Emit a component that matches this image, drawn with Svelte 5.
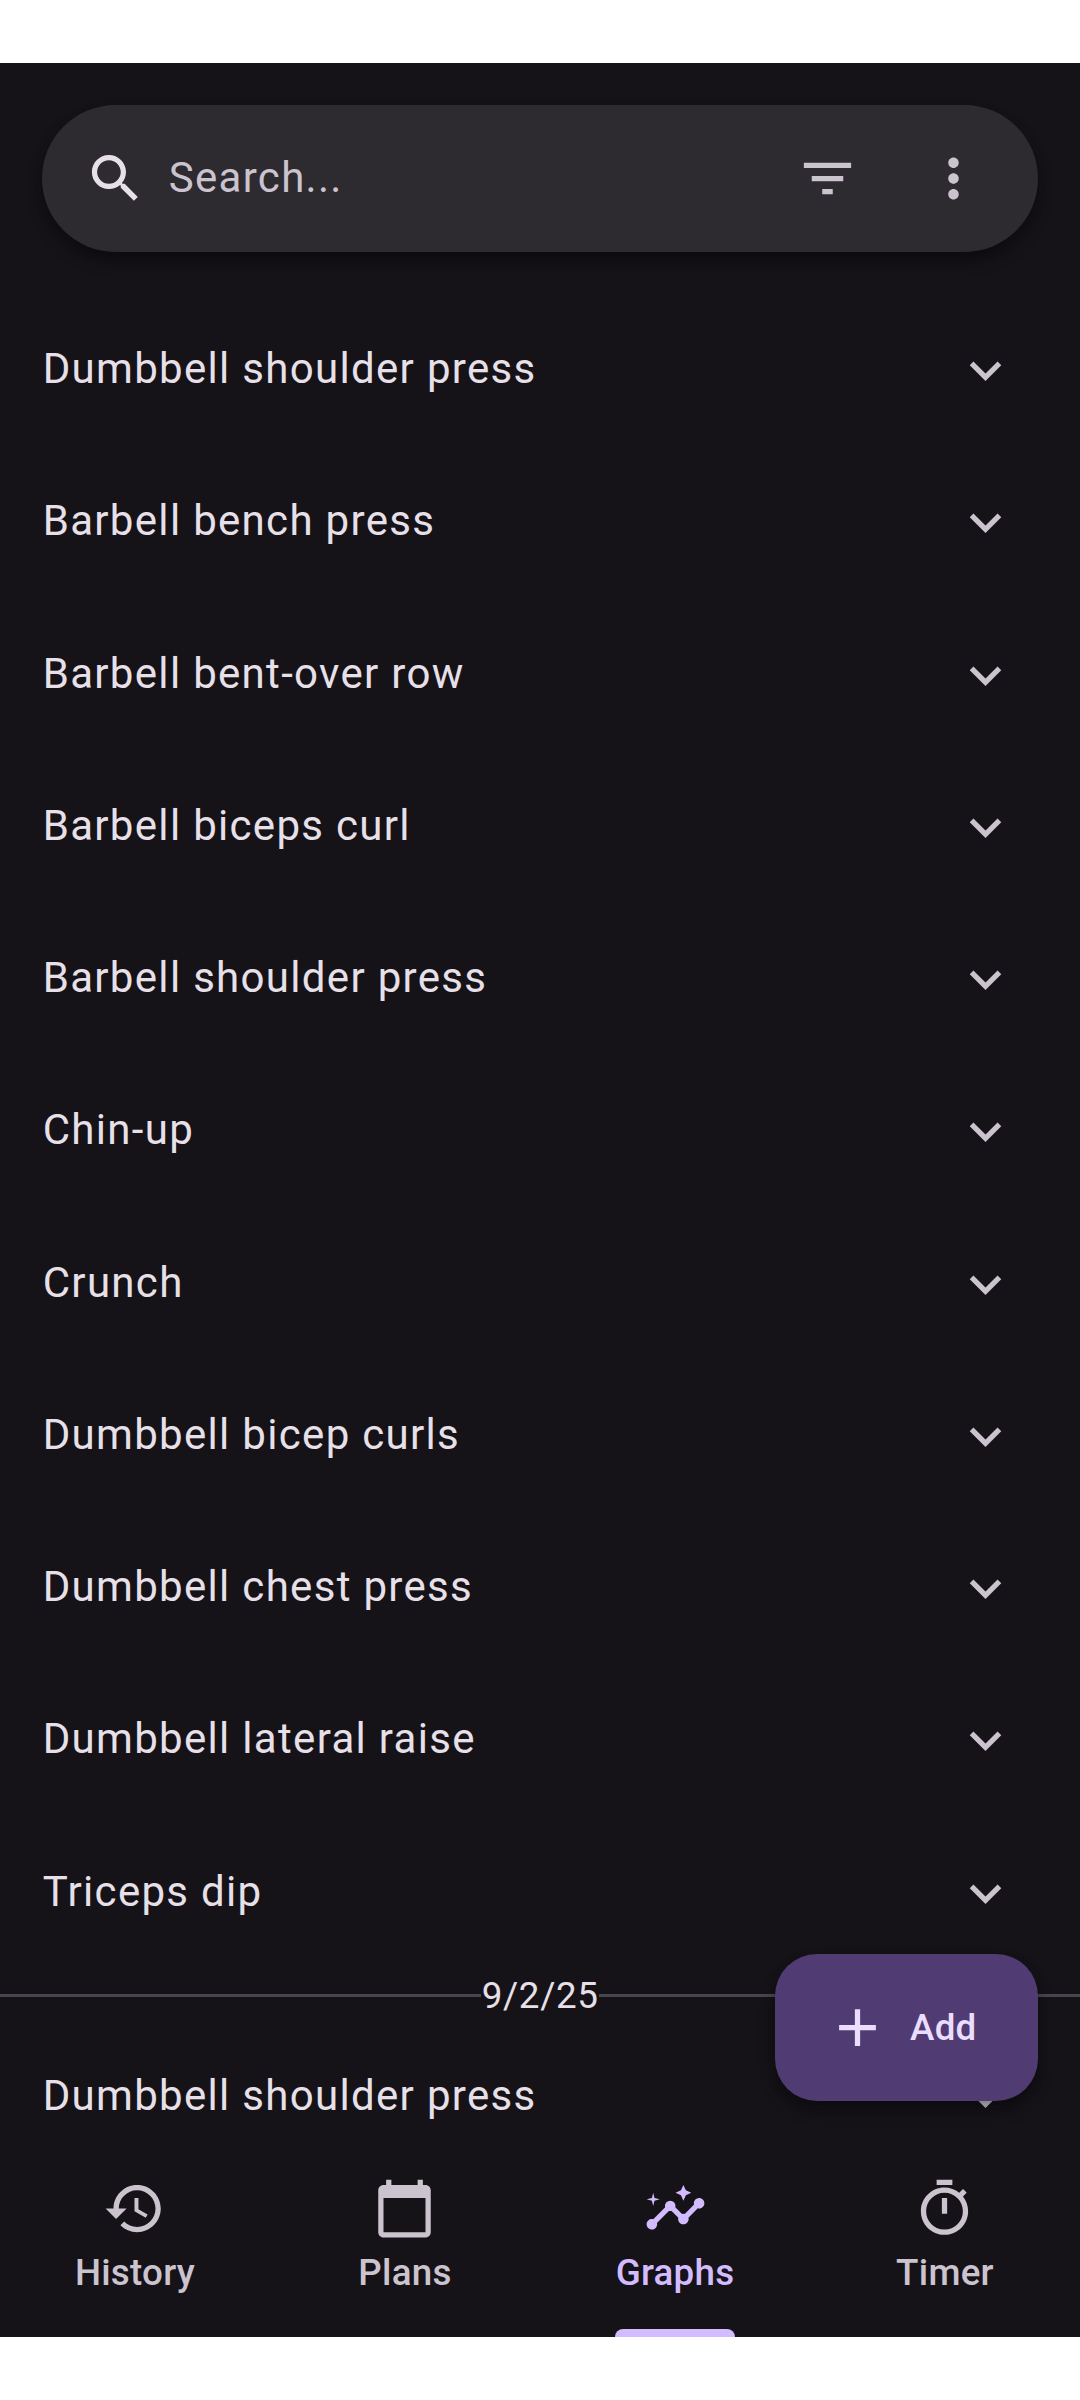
<script>
  const exercises = [
    'Dumbbell shoulder press',
    'Barbell bench press',
    'Barbell bent-over row',
    'Barbell biceps curl',
    'Barbell shoulder press',
    'Chin-up',
    'Crunch',
    'Dumbbell bicep curls',
    'Dumbbell chest press',
    'Dumbbell lateral raise',
    'Triceps dip'
  ];
  const earlier = ['Dumbbell shoulder press'];

  const tabs = [
    {
      label: 'History',
      icon: 'M13 3c-4.97 0-9 4.03-9 9H1l3.89 3.89.07.14L9 12H6c0-3.87 3.13-7 7-7s7 3.13 7 7-3.13 7-7 7c-1.93 0-3.68-.79-4.94-2.06l-1.42 1.42C8.27 19.99 10.51 21 13 21c4.97 0 9-4.03 9-9s-4.03-9-9-9zm-1 5v5l4.28 2.54.72-1.21-3.5-2.08V8H12z'
    },
    {
      label: 'Plans',
      icon: 'M20 3h-1V1h-2v2H7V1H5v2H4c-1.1 0-2 .9-2 2v16c0 1.1.9 2 2 2h16c1.1 0 2-.9 2-2V5c0-1.1-.9-2-2-2zm0 18H4V8h16v13z'
    },
    {
      label: 'Graphs',
      active: true,
      icon: 'M21 8c-1.45 0-2.26 1.44-1.93 2.51l-3.55 3.56c-.3-.09-.74-.09-1.04 0l-2.55-2.55C12.27 10.45 11.46 9 10 9c-1.45 0-2.27 1.44-1.93 2.52l-4.56 4.55C2.44 15.74 1 16.55 1 18c0 1.1.9 2 2 2 1.45 0 2.26-1.44 1.93-2.51l4.55-4.56c.3.09.74.09 1.04 0l2.55 2.55C12.73 16.55 13.54 18 15 18c1.45 0 2.27-1.44 1.93-2.52l3.56-3.55C21.56 12.26 23 11.45 23 10c0-1.1-.9-2-2-2zM15 9l.94-2.07L18 6l-2.06-.93L15 3l-.92 2.07L12 6l2.08.93zM3.5 11L4 9l2-.5L4 8l-.5-2L3 8l-2 .5L3 9z'
    },
    {
      label: 'Timer',
      icon: 'M15 1H9v2h6V1zm-4 13h2V8h-2v6zm8.03-6.61l1.42-1.42c-.43-.51-.9-.99-1.41-1.41l-1.42 1.42C16.07 4.74 14.12 4 12 4c-4.97 0-9 4.03-9 9s4.02 9 9 9 9-4.03 9-9c0-2.12-.74-4.07-1.97-5.61zM12 20c-3.87 0-7-3.13-7-7s3.13-7 7-7 7 3.13 7 7-3.13 7-7 7z'
    }
  ];
</script>

{#snippet icon(path)}
  <svg class="icon" viewBox="0 0 24 24" aria-hidden="true"><path d={path} /></svg>
{/snippet}

{#snippet row(name)}
  <li class="row">
    <span class="name">{name}</span>
    {@render icon('M16.59 8.59L12 13.17 7.41 8.59 6 10l6 6 6-6z')}
  </li>
{/snippet}

<div class="screen">
  <main>
    <div class="search">
      <span class="lens">
        {@render icon('M15.5 14h-.79l-.28-.27C15.41 12.59 16 11.11 16 9.5 16 5.91 13.09 3 9.5 3S3 5.91 3 9.5 5.91 16 9.5 16c1.61 0 3.09-.59 4.23-1.57l.27.28v.79l5 4.99L20.49 19l-4.99-5zm-6 0C7.01 14 5 11.99 5 9.5S7.01 5 9.5 5 14 7.01 14 9.5 11.99 14 9.5 14z')}
      </span>
      <span class="hint">Search...</span>
      <span class="action">{@render icon('M10 18h4v-2h-4v2zM3 6v2h18V6H3zm3 7h12v-2H6v2z')}</span>
      <span class="action">
        {@render icon('M12 8c1.1 0 2-.9 2-2s-.9-2-2-2-2 .9-2 2 .9 2 2 2zm0 2c-1.1 0-2 .9-2 2s.9 2 2 2 2-.9 2-2-.9-2-2-2zm0 6c-1.1 0-2 .9-2 2s.9 2 2 2 2-.9 2-2-.9-2-2-2z')}
      </span>
    </div>

    <ul>
      {#each exercises as name}
        {@render row(name)}
      {/each}
    </ul>
    <div class="date"><span>9/2/25</span></div>
    <ul>
      {#each earlier as name}
        {@render row(name)}
      {/each}
    </ul>

    <div class="add">
      {@render icon('M19 13h-6v6h-2v-6H5v-2h6V5h2v6h6v2z')}
      <span>Add</span>
    </div>
  </main>

  <nav>
    {#each tabs as tab}
      <div class="tab" class:active={tab.active}>
        <div class="content">
          {@render icon(tab.icon)}
          <span class="label">{tab.label}</span>
        </div>
      </div>
    {/each}
  </nav>
</div>

<style>
  :global(body) {
    background: #fff;
  }
  .screen {
    box-sizing: border-box;
    width: 1080px;
    height: 2400px;
    padding: 63px 0;
    display: flex;
    flex-direction: column;
    font-family: Roboto, sans-serif;
    color: #e7e0e8;
    background: #151218 content-box;
  }
  main {
    position: relative;
    flex: 1;
    min-height: 0;
    overflow: hidden;
  }
  .icon {
    display: block;
    flex: none;
    width: 63px;
    height: 63px;
    fill: #cbc4cf;
  }
  .search {
    display: flex;
    align-items: center;
    height: 147px;
    margin: 42px 42px 42.4px;
    padding: 0 21.5px 0 42px;
    box-sizing: border-box;
    border-radius: 74px;
    background: #2d2a30;
    box-shadow: 0 10px 16px rgba(0, 0, 0, 0.25), 0 4px 10px rgba(0, 0, 0, 0.15);
  }
  .lens .icon,
  .lens :global(.icon) {
    fill: #e7e0e8;
  }
  .hint {
    flex: 1;
    margin-left: 21.7px;
    padding-bottom: 2px;
    font-size: 42px;
    line-height: 63px;
    letter-spacing: 1.3125px;
    color: #cbc4cf;
  }
  .action {
    width: 126px;
    display: flex;
    justify-content: center;
  }
  ul {
    list-style: none;
    margin: 0;
    padding: 0;
  }
  .row {
    display: flex;
    align-items: center;
    justify-content: space-between;
    height: 152.25px;
    padding: 0 63px 0 42.7px;
  }
  .name {
    font-size: 42px;
    line-height: 63px;
    letter-spacing: 1.3125px;
    padding-bottom: 4px;
  }
  .date {
    display: flex;
    align-items: center;
    height: 52.5px;
    font-size: 36.75px;
    line-height: 52.5px;
    letter-spacing: 0.656px;
  }
  .date span {
    padding: 2px 0 0 0.3px;
  }
  .date::before,
  .date::after {
    content: '';
    flex: 1;
    height: 3px;
    background: #49454e;
  }
  .add {
    position: absolute;
    right: 42px;
    bottom: 47px;
    display: flex;
    align-items: center;
    gap: 21px;
    box-sizing: border-box;
    width: 262.6px;
    height: 147px;
    padding-left: 50.6px;
    border-radius: 42px;
    background: #503c72;
    color: #ebddff;
    font-size: 36.75px;
    font-weight: 500;
    letter-spacing: 0.2625px;
    box-shadow: 0 10px 16px rgba(0, 0, 0, 0.25), 0 4px 10px rgba(0, 0, 0, 0.15);
  }
  .add .icon {
    fill: #ebddff;
  }
  nav {
    display: flex;
    height: 189px;
  }
  .tab {
    flex: 1;
    display: flex;
    justify-content: center;
  }
  .content {
    position: relative;
    display: flex;
    flex-direction: column;
    align-items: center;
    padding-top: 29px;
    color: #cbc4cf;
  }
  .label {
    margin-top: 7px;
    font-size: 36.75px;
    line-height: 52.5px;
    font-weight: 500;
    letter-spacing: 0.2625px;
  }
  .active .content {
    color: #d3bbff;
  }
  .active .icon {
    fill: #d3bbff;
  }
  .active .content::after {
    content: '';
    position: absolute;
    left: -0.7px;
    right: -0.7px;
    bottom: 0;
    height: 8px;
    border-radius: 8px 8px 0 0;
    background: #d3bbff;
  }
</style>
